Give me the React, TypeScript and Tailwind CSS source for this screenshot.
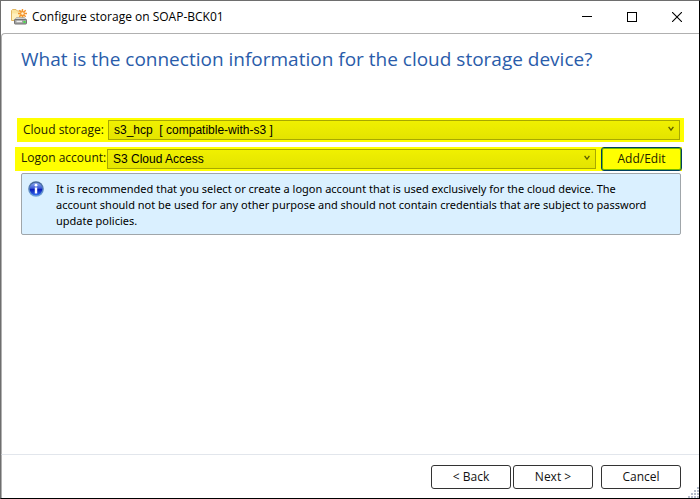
import React, { useState } from 'react';

interface StorageSelectProps {
  id: string;
  value: string;
  options: string[];
  onChange: (value: string) => void;
}

const StorageSelect: React.FC<StorageSelectProps> = ({ id, value, options, onChange }) => (
  <div className="relative flex-1 min-w-0">
    <select
      id={id}
      value={value}
      onChange={(e) => onChange(e.target.value)}
      className="block w-full h-5 appearance-none border border-[#a8a800] bg-linear-to-b from-[#f0f000] to-[#e4e400] pl-[5px] pr-6 font-['Liberation_Sans',Arial,sans-serif] text-xs leading-4 text-black whitespace-pre outline-none"
    >
      {options.map((option) => (
        <option key={option} value={option}>{option}</option>
      ))}
    </select>
    <svg className="pointer-events-none absolute right-1.5 top-1.5 h-[6px] w-[6px]" viewBox="0 0 6 6" fill="none" stroke="#5c5c00" strokeWidth="1.3">
      <path d="M0.6 0.8 L3 4.2 L5.4 0.8" />
    </svg>
  </div>
);

const StorageIcon = () => (
  <svg className="h-4 w-4" viewBox="0 0 16 16">
    <path d="M0.5 11.5 V1.5 L1.5 0.5 H5 L6.5 2 H12 V11.5 Z" fill="#fbe5a0" stroke="#e2b763" />
    <path d="M1 4.5 H8 V11 H1 Z" fill="#fff0bd" />
    <path d="M11.5 0 V9 M7 4.5 H16 M8.3 1.3 L14.7 7.7 M14.7 1.3 L8.3 7.7" stroke="#f5922a" strokeWidth="1.4" />
    <circle cx="11.5" cy="4.5" r="1.6" fill="#fff3d5" stroke="#f59a35" strokeWidth="0.6" />
    <path d="M3.5 11 L5.5 8.5 H13.5 L15.5 11 Z" fill="#d4d4d4" stroke="#999999" strokeWidth="0.6" />
    <rect x="3.5" y="10.5" width="12" height="4.5" rx="0.6" fill="#a2a2a2" stroke="#737373" />
    <path d="M5.5 12.5 H11" stroke="#eeeeee" strokeWidth="1.4" />
    <rect x="12.5" y="12" width="2" height="2" fill="#45e04a" />
  </svg>
);

const InfoIcon = () => (
  <svg className="h-4 w-4 shrink-0" viewBox="0 0 16 16">
    <defs>
      <linearGradient id="info-rim" x1="0" y1="0" x2="0" y2="1">
        <stop offset="0" stopColor="#406296" />
        <stop offset="1" stopColor="#6fa4dd" />
      </linearGradient>
      <linearGradient id="info-fill" x1="0" y1="0" x2="0" y2="1">
        <stop offset="0" stopColor="#8da8ee" />
        <stop offset="0.45" stopColor="#3a59d5" />
        <stop offset="0.5" stopColor="#0816b5" />
        <stop offset="1" stopColor="#316aed" />
      </linearGradient>
    </defs>
    <circle cx="8" cy="8" r="7.8" fill="url(#info-rim)" />
    <circle cx="8" cy="8" r="6.3" fill="url(#info-fill)" />
    <circle cx="8" cy="4.2" r="1.4" fill="#ffffff" />
    <path d="M6.8 6.5 H9.2 V12.5 H6.8 Z" fill="#ffffff" />
  </svg>
);

const App: React.FC = () => {
  const [storage, setStorage] = useState('s3_hcp\u00a0\u00a0[ compatible-with-s3 ]');
  const [account, setAccount] = useState('S3 Cloud Access');

  const footerButton = 'h-6 w-20 rounded-[3px] border border-[#333333] bg-white text-xs leading-4 text-[#111111]';

  return (
    <div className="flex min-h-screen flex-col border border-t-[#6e6e6e] border-l-[#6e6e6e] border-r-black border-b-black bg-white font-['Open_Sans','Noto_Sans',sans-serif] text-xs text-black">
      <header className="flex h-8 shrink-0 items-center pl-2.5">
        <StorageIcon />
        <h1 className="ml-[5px] flex-1 text-xs leading-4">Configure storage on SOAP-BCK01</h1>
        <button type="button" aria-label="Minimize" className="flex h-8 w-[45px] items-center justify-center">
          <svg className="h-[10px] w-[10px]" viewBox="0 0 10 10" stroke="black" shapeRendering="crispEdges"><path d="M0 4.5 H10" /></svg>
        </button>
        <button type="button" aria-label="Maximize" className="flex h-8 w-[45px] items-center justify-center">
          <svg className="h-[10px] w-[10px]" viewBox="0 0 10 10" fill="none" stroke="black" shapeRendering="crispEdges"><path d="M0.5 0.5 H9.5 V9.5 H0.5 Z" /></svg>
        </button>
        <button type="button" aria-label="Close" className="flex h-8 w-[45px] items-center justify-center">
          <svg className="h-[10px] w-[10px]" viewBox="0 0 10 10" stroke="black" strokeWidth="1.1"><path d="M0 0 L10 10 M10 0 L0 10" /></svg>
        </button>
      </header>

      <main className="flex flex-1 flex-col rounded-tl border-t border-l border-[#b0b0b0]">
        <h2 className="pt-[11px] pl-[19px] text-[19px] leading-7 text-[#2a5caa]">
          What is the connection information for the cloud storage device?
        </h2>

        <div className="mt-[45px] mr-[15px] ml-[15px] flex h-6 items-center bg-[#ffff00] pr-1 pl-1.5">
          <label htmlFor="cloud-storage" className="w-[85px] text-xs leading-4 whitespace-nowrap text-[#222200]">Cloud storage:</label>
          <StorageSelect
            id="cloud-storage"
            value={storage}
            options={['s3_hcp\u00a0\u00a0[ compatible-with-s3 ]']}
            onChange={setStorage}
          />
        </div>

        <div className="mt-[5px] mr-[17px] ml-[13px] flex h-6 items-center bg-[#ffff00] pl-1.5">
          <label htmlFor="logon-account" className="w-[86px] pb-0.5 text-xs leading-4 whitespace-nowrap text-[#222200]">Logon account:</label>
          <StorageSelect
            id="logon-account"
            value={account}
            options={['S3 Cloud Access']}
            onChange={setAccount}
          />
          <button type="button" className="ml-[5px] h-6 w-[81px] rounded-[3px] border border-[#004060] bg-[#ffff00] text-xs leading-4 text-[#222200] inset-ring inset-ring-[#70b800]">
            Add/Edit
          </button>
        </div>

        <div className="mt-0.5 mr-[18px] ml-[19px] flex gap-3 rounded-xs border border-[#a0a6aa] bg-[#daf0ff] pt-[7px] pr-3 pb-[5px] pl-1.5">
          <InfoIcon />
          <p className="font-['Noto_Sans','Open_Sans',sans-serif] text-[11px] leading-4">
            It is recommended that you select or create a logon account that is used exclusively for the cloud device. The
            <br />
            account should not be used for any other purpose and should not contain credentials that are subject to password
            <br />
            update policies.
          </p>
        </div>
      </main>

      <footer className="relative flex h-11 shrink-0 items-center justify-end gap-0.5 border-t border-l border-t-[#e2e6ec] border-l-[#b0b0b0] pr-[18px]">
        <button type="button" className={footerButton}>&lt; Back</button>
        <button type="button" className={footerButton}>Next &gt;</button>
        <button type="button" className={`ml-1.5 ${footerButton}`}>Cancel</button>
        <svg className="absolute right-0 bottom-0 h-3 w-3" viewBox="0 0 12 12" fill="#b6bdcc">
          <path d="M10 1h2v2h-2zM7 4h2v2h-2zM10 4h2v2h-2zM4 7h2v2h-2zM7 7h2v2h-2zM10 7h2v2h-2zM1 10h2v2h-2zM4 10h2v2h-2zM7 10h2v2h-2zM10 10h2v2h-2z" />
        </svg>
      </footer>
    </div>
  );
};

export default App;
